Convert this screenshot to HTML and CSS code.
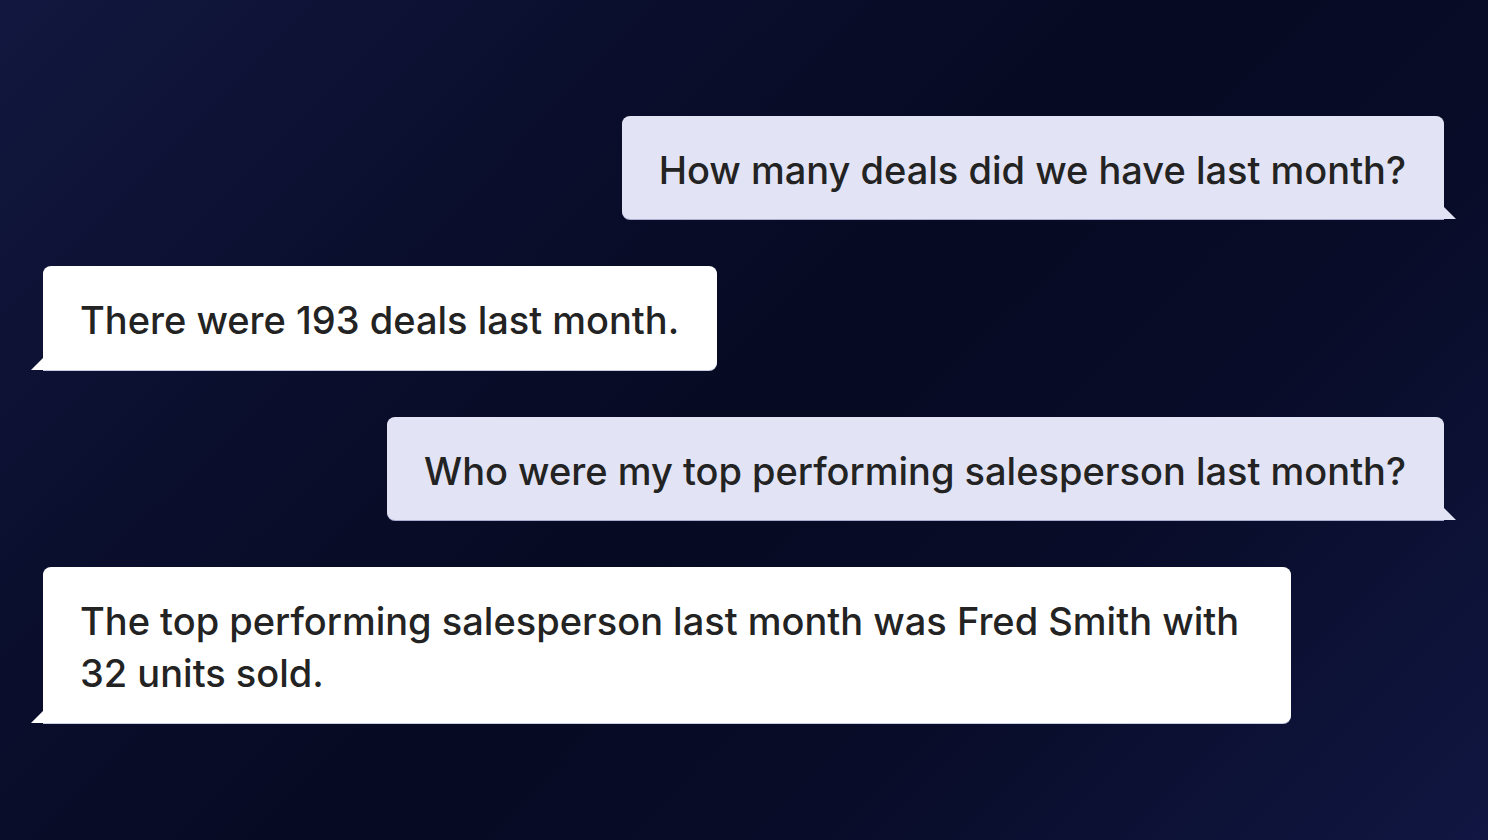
FILE: index.html
```html
<!DOCTYPE html>
<html lang="en">
<head>
<meta charset="utf-8">
<title>Chat</title>
<link rel="stylesheet" href="styles.css">
</head>
<body>
<main class="chat">
  <div class="bubble user">How many deals did we have last month?</div>
  <div class="bubble bot">There were 193 deals last month.</div>
  <div class="bubble user">Who were my top performing salesperson last month?</div>
  <div class="bubble bot wide">The top performing salesperson last month was Fred Smith with 32 units sold.</div>
</main>
</body>
</html>
```

FILE: styles.css
```css
html, body {
  margin: 0;
  padding: 0;
  height: 100%;
}
body {
  background: linear-gradient(135deg, #12173f 0%, #0a0e2c 30%, #060a22 50%, #080c28 70%, #111642 100%);
  font-family: "Inter", "Noto Sans", sans-serif;
  overflow: hidden;
}
.chat {
  display: flex;
  flex-direction: column;
  gap: 47px;
  padding: 116px 44px 0 43px;
}
.bubble {
  position: relative;
  box-sizing: border-box;
  font-size: 38px;
  line-height: 52px;
  font-weight: 500;
  color: #232323;
  padding: 28px 38px 23px 37px;
  border-radius: 8px;
}
.bubble::after {
  content: "";
  position: absolute;
  bottom: 0;
  width: 13px;
  height: 13px;
}
.user {
  align-self: flex-end;
  background: #e2e3f4;
  border-bottom-right-radius: 0;
  box-shadow: 0 1px 0 #a9add0;
}
.user::after {
  right: -12px;
  background: #e2e3f4;
  clip-path: polygon(0 0, 100% 100%, 0 100%);
}
.bot {
  align-self: flex-start;
  background: #ffffff;
  border-bottom-left-radius: 0;
  box-shadow: 0 1px 0 #c9cce6;
  padding-bottom: 24px;
}
.bot::after {
  left: -12px;
  background: #ffffff;
  clip-path: polygon(100% 0, 100% 100%, 0 100%);
}
.wide {
  width: 1248px;
}
```
